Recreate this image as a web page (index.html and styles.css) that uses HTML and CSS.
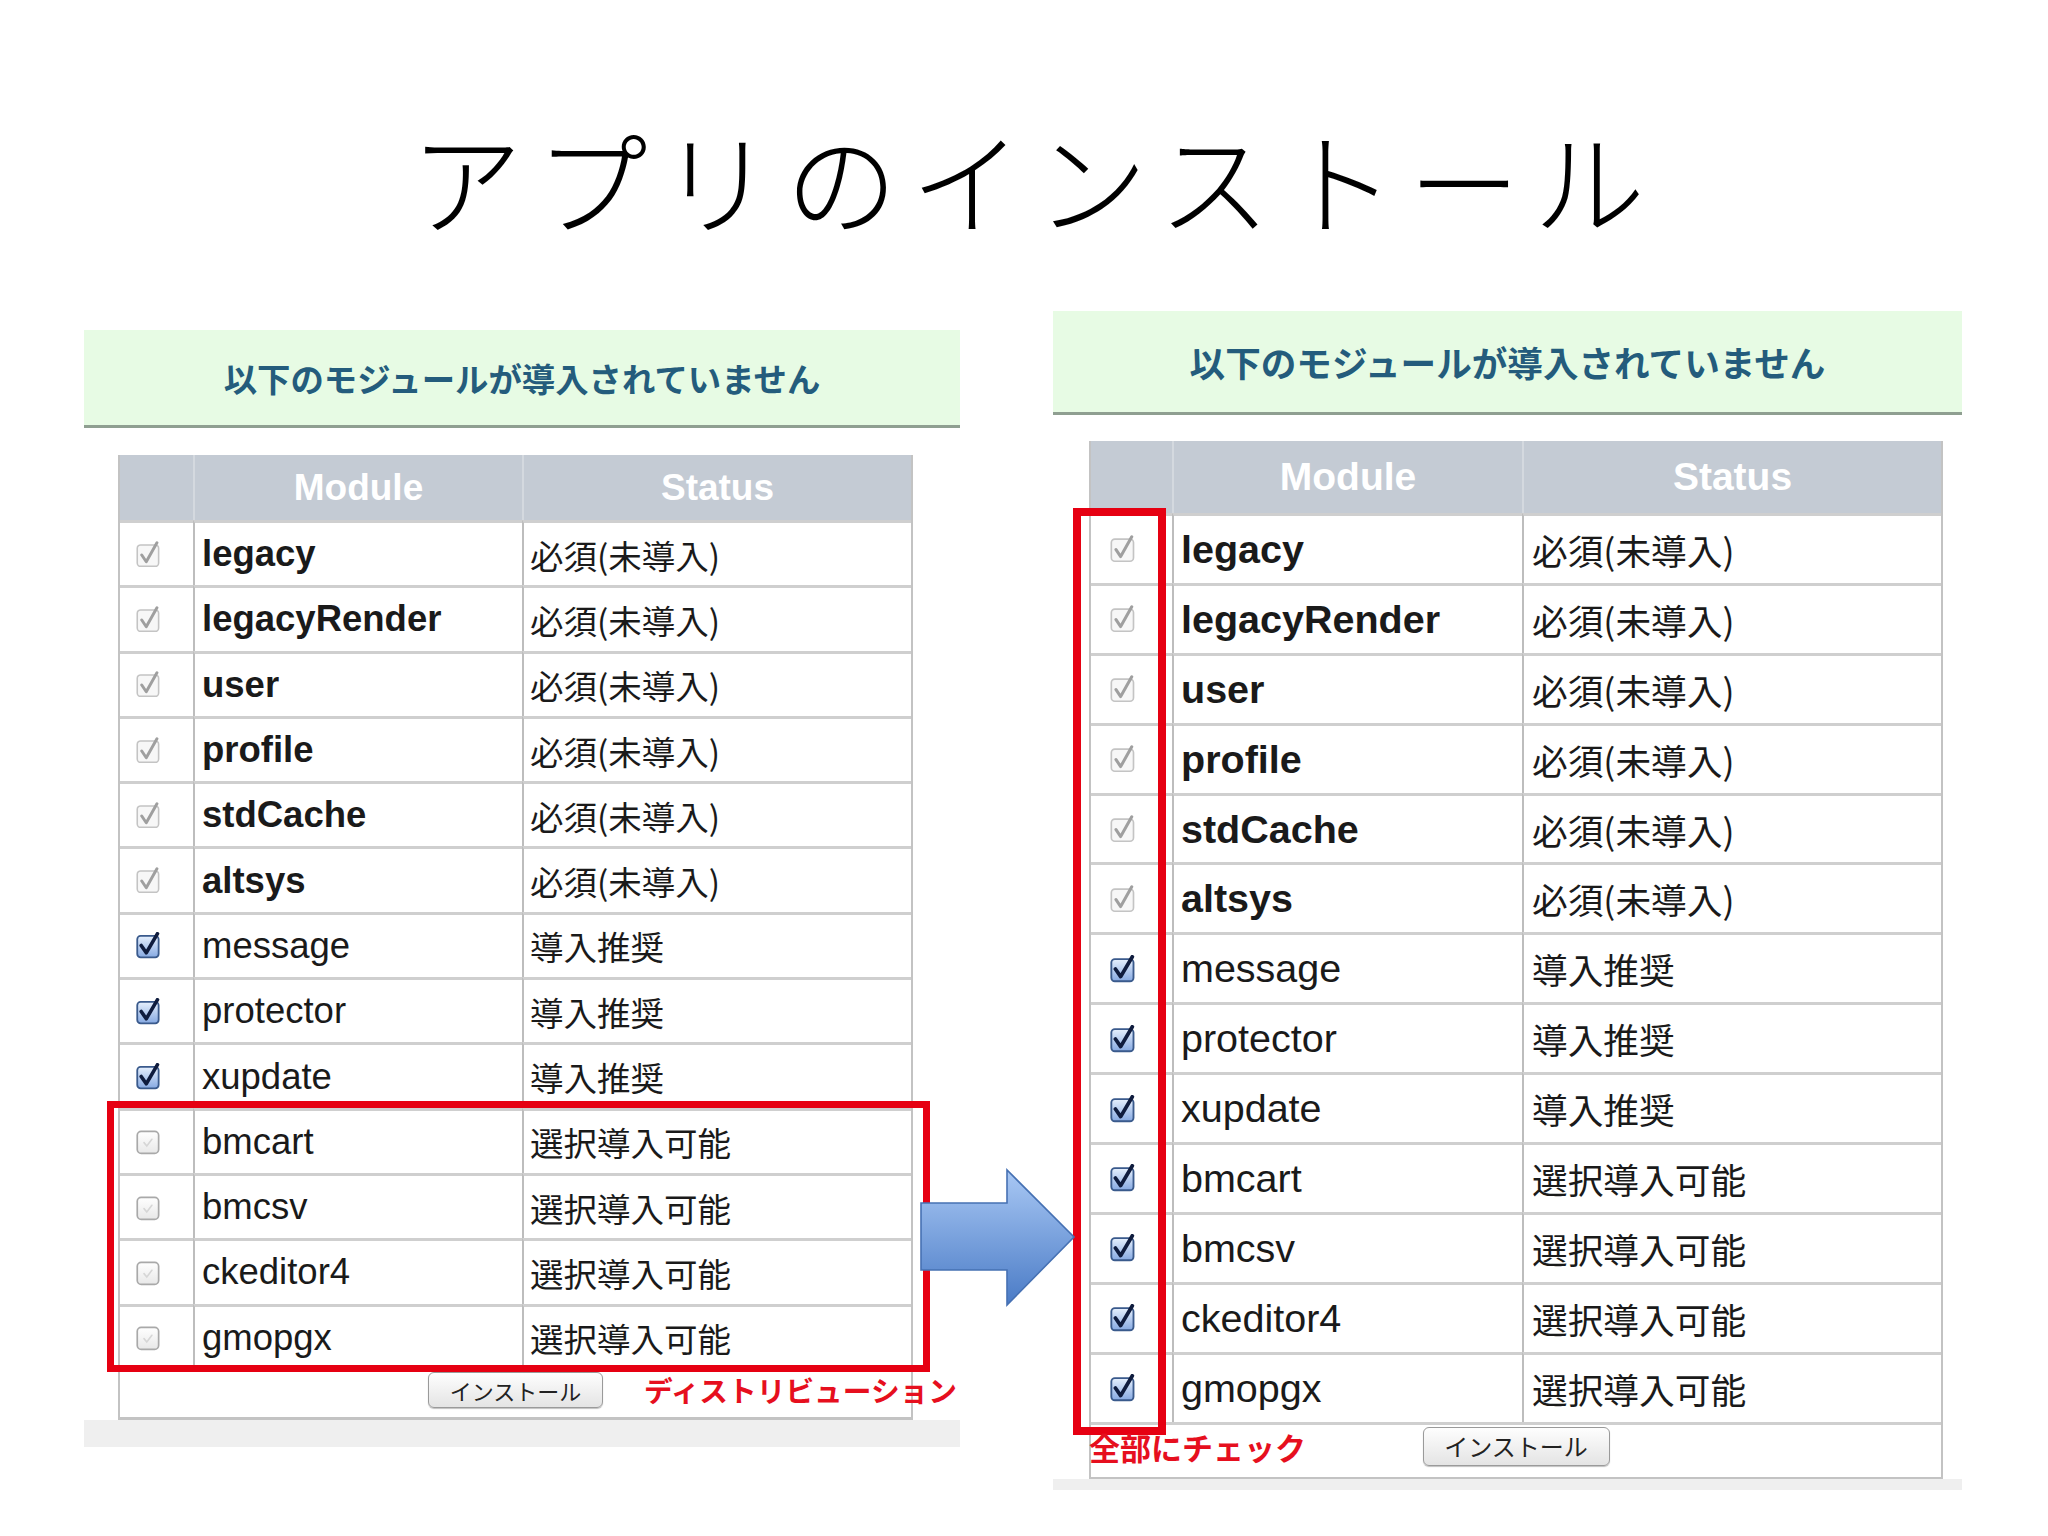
FILE: index.html
```html
<!DOCTYPE html>
<html lang="ja">
<head>
<meta charset="utf-8">
<title>アプリのインストール</title>
<link rel="stylesheet" href="styles.css">
</head>
<body>
<svg class="defs" width="0" height="0" aria-hidden="true">
  <defs>
    <linearGradient id="gBlue" x1="0" y1="0" x2="0" y2="1">
      <stop offset="0" stop-color="#e6f0fd"/>
      <stop offset="1" stop-color="#86a9e2"/>
    </linearGradient>
    <linearGradient id="gOff" x1="0" y1="0" x2="0" y2="1">
      <stop offset="0" stop-color="#ffffff"/>
      <stop offset="1" stop-color="#e8e8e8"/>
    </linearGradient>
    <linearGradient id="gArrow" x1="0" y1="0" x2="0" y2="1">
      <stop offset="0" stop-color="#a9c8f4"/>
      <stop offset="1" stop-color="#4a7bc6"/>
    </linearGradient>
    <symbol id="cb-dis" viewBox="0 0 24 24">
      <rect x="2" y="3.5" width="19" height="19" rx="3" fill="#f7f7f7" stroke="#c4c4c4" stroke-width="1.4"/>
      <path d="M6 12.5 L10 18.5 L19.5 1.5" fill="none" stroke="#9f9f9f" stroke-width="2.6" stroke-linecap="round" stroke-linejoin="round"/>
    </symbol>
    <symbol id="cb-on" viewBox="0 0 24 24">
      <rect x="2" y="3.5" width="19" height="19" rx="3" fill="url(#gBlue)" stroke="#3a5a8c" stroke-width="1.6"/>
      <path d="M5.5 12 L10 18.5 L20 1.5" fill="none" stroke="#0f1c3e" stroke-width="3.2" stroke-linecap="round" stroke-linejoin="round"/>
    </symbol>
    <symbol id="cb-off" viewBox="0 0 24 24">
      <rect x="2" y="3" width="19" height="19.5" rx="3.5" fill="url(#gOff)" stroke="#a9a9a9" stroke-width="1.5"/>
      <path d="M8 13 L10.5 16 L15 10" fill="none" stroke="#d6d6d6" stroke-width="1.4" stroke-linecap="round"/>
    </symbol>
  </defs>
</svg>

<h1 class="title">アプリのインストール</h1>

<main class="stage">
  <section class="panel panel-a">
    <div class="notice">以下のモジュールが導入されていません</div>
    <div class="tbox">
      <div class="grid">
        <div class="hd"></div><div class="hd">Module</div><div class="hd">Status</div>

        <div class="c cb"><svg class="box"><use href="#cb-dis"/></svg></div><div class="c name req">legacy</div><div class="c st">必須(未導入)</div>
        <div class="c cb"><svg class="box"><use href="#cb-dis"/></svg></div><div class="c name req">legacyRender</div><div class="c st">必須(未導入)</div>
        <div class="c cb"><svg class="box"><use href="#cb-dis"/></svg></div><div class="c name req">user</div><div class="c st">必須(未導入)</div>
        <div class="c cb"><svg class="box"><use href="#cb-dis"/></svg></div><div class="c name req">profile</div><div class="c st">必須(未導入)</div>
        <div class="c cb"><svg class="box"><use href="#cb-dis"/></svg></div><div class="c name req">stdCache</div><div class="c st">必須(未導入)</div>
        <div class="c cb"><svg class="box"><use href="#cb-dis"/></svg></div><div class="c name req">altsys</div><div class="c st">必須(未導入)</div>
        <div class="c cb"><svg class="box"><use href="#cb-on"/></svg></div><div class="c name">message</div><div class="c st">導入推奨</div>
        <div class="c cb"><svg class="box"><use href="#cb-on"/></svg></div><div class="c name">protector</div><div class="c st">導入推奨</div>
        <div class="c cb"><svg class="box"><use href="#cb-on"/></svg></div><div class="c name">xupdate</div><div class="c st">導入推奨</div>
        <div class="c cb"><svg class="box"><use href="#cb-off"/></svg></div><div class="c name">bmcart</div><div class="c st">選択導入可能</div>
        <div class="c cb"><svg class="box"><use href="#cb-off"/></svg></div><div class="c name">bmcsv</div><div class="c st">選択導入可能</div>
        <div class="c cb"><svg class="box"><use href="#cb-off"/></svg></div><div class="c name">ckeditor4</div><div class="c st">選択導入可能</div>
        <div class="c cb"><svg class="box"><use href="#cb-off"/></svg></div><div class="c name">gmopgx</div><div class="c st">選択導入可能</div>
      </div>
      <div class="foot"><button class="btn" type="button">インストール</button></div>
    </div>
    <div class="band"></div>
  </section>

  <section class="panel panel-b">
    <div class="notice">以下のモジュールが導入されていません</div>
    <div class="tbox">
      <div class="grid">
        <div class="hd"></div><div class="hd">Module</div><div class="hd">Status</div>

        <div class="c cb"><svg class="box"><use href="#cb-dis"/></svg></div><div class="c name req">legacy</div><div class="c st">必須(未導入)</div>
        <div class="c cb"><svg class="box"><use href="#cb-dis"/></svg></div><div class="c name req">legacyRender</div><div class="c st">必須(未導入)</div>
        <div class="c cb"><svg class="box"><use href="#cb-dis"/></svg></div><div class="c name req">user</div><div class="c st">必須(未導入)</div>
        <div class="c cb"><svg class="box"><use href="#cb-dis"/></svg></div><div class="c name req">profile</div><div class="c st">必須(未導入)</div>
        <div class="c cb"><svg class="box"><use href="#cb-dis"/></svg></div><div class="c name req">stdCache</div><div class="c st">必須(未導入)</div>
        <div class="c cb"><svg class="box"><use href="#cb-dis"/></svg></div><div class="c name req">altsys</div><div class="c st">必須(未導入)</div>
        <div class="c cb"><svg class="box"><use href="#cb-on"/></svg></div><div class="c name">message</div><div class="c st">導入推奨</div>
        <div class="c cb"><svg class="box"><use href="#cb-on"/></svg></div><div class="c name">protector</div><div class="c st">導入推奨</div>
        <div class="c cb"><svg class="box"><use href="#cb-on"/></svg></div><div class="c name">xupdate</div><div class="c st">導入推奨</div>
        <div class="c cb"><svg class="box"><use href="#cb-on"/></svg></div><div class="c name">bmcart</div><div class="c st">選択導入可能</div>
        <div class="c cb"><svg class="box"><use href="#cb-on"/></svg></div><div class="c name">bmcsv</div><div class="c st">選択導入可能</div>
        <div class="c cb"><svg class="box"><use href="#cb-on"/></svg></div><div class="c name">ckeditor4</div><div class="c st">選択導入可能</div>
        <div class="c cb"><svg class="box"><use href="#cb-on"/></svg></div><div class="c name">gmopgx</div><div class="c st">選択導入可能</div>
      </div>
      <div class="foot"><button class="btn" type="button">インストール</button></div>
    </div>
    <div class="band"></div>
  </section>
</main>

<div class="redbox redbox-a"></div>
<div class="redbox redbox-b"></div>

<svg class="arrow" viewBox="0 0 160 140" aria-hidden="true">
  <path d="M3 35 L89 35 L89 2 L156 69 L89 137 L89 102 L3 102 Z" fill="url(#gArrow)" stroke="#4671b3" stroke-width="1.6" stroke-linejoin="miter"/>
</svg>

<span class="note note-a">ディストリビューション</span>
<span class="note note-b">全部にチェック</span>
</body>
</html>
```

FILE: styles.css
```css
* { box-sizing: border-box; }

html, body { margin: 0; }

body {
  width: 2048px;
  height: 1536px;
  position: relative;
  overflow: hidden;
  background: #ffffff;
  font-family: "Liberation Sans", "Noto Sans CJK JP", sans-serif;
  color: #1c1c1c;
}

.defs { position: absolute; width: 0; height: 0; overflow: hidden; }

.title {
  margin: 0;
  padding: 111px 0 0 21px;
  height: 245px;
  line-height: 134px;
  font-family: "Noto Sans CJK JP", sans-serif;
  font-weight: 300;
  font-size: 112px;
  letter-spacing: 13px;
  text-align: center;
  color: #000;
}

.stage { display: flex; align-items: flex-start; }

.panel-a { width: 876px; margin: 85px 0 0 84px; }
.panel-b { width: 909px; margin: 66px 0 0 93px; }

.notice {
  background: #e7fbe4;
  border-bottom: 3px solid #8f9f91;
  text-align: center;
  font-family: "Noto Sans CJK JP", sans-serif;
  font-weight: 700;
  color: #245c7c;
}
.panel-a .notice { height: 98px; line-height: 95px; font-size: 33.4px; }
.panel-b .notice { height: 104px; line-height: 101px; font-size: 35.6px; }

.tbox {
  background: #fff;
  border-style: solid;
  border-color: #c3c3c3;
  border-width: 0 2px 3px 2px;
}
.panel-a .tbox { width: 795px; margin: 27px 0 0 34px; }
.panel-b .tbox { width: 854px; margin: 26px 0 0 36px; border-bottom-width: 2px; }

.grid { display: grid; }
.panel-a .grid {
  grid-template-columns: 73px 329px 1fr;
  grid-template-rows: 65px;
  grid-auto-rows: 65.3px;
}
.panel-b .grid {
  grid-template-columns: 81px 350px 1fr;
  grid-template-rows: 72px;
  grid-auto-rows: 69.9px;
}

.hd {
  background: #c4cbd4;
  color: #ffffff;
  font-weight: 700;
  display: flex;
  align-items: center;
  justify-content: center;
}
.hd + .hd { border-left: 2px solid #d4d9df; }
.panel-a .hd { font-size: 37px; }
.panel-b .hd { font-size: 39px; }

.c {
  display: flex;
  align-items: center;
  border-top: 3px solid #cfcfcf;
  border-left: 2px solid #bdbdbd;
  white-space: nowrap;
}
.c.cb { border-left: 0; }

.panel-a .cb { padding-left: 15px; }
.panel-b .cb { padding-left: 18px; }
.panel-a .box { width: 27px; height: 27px; }
.panel-b .box { width: 28px; height: 28px; }

.name { color: #1a1a1a; }
.name.req { font-weight: 700; }
.panel-a .name { font-size: 36.5px; padding-left: 7px; }
.panel-b .name { font-size: 39.5px; padding-left: 7px; }

.st { font-family: "Noto Sans CJK JP", sans-serif; color: #1a1a1a; }
.panel-a .st { font-size: 33.5px; padding-left: 6px; }
.panel-b .st { font-size: 35.7px; padding-left: 8px; }

.foot {
  border-top: 3px solid #cfcfcf;
  display: flex;
  justify-content: center;
  align-items: flex-start;
}
.panel-a .foot { height: 48px; padding-top: 0; }
.panel-b .foot { height: 55px; padding-top: 2px; }

.btn {
  font-family: "Noto Sans CJK JP", sans-serif;
  color: #222;
  border: 1px solid #9a9a9a;
  border-radius: 6px;
  background: linear-gradient(#fefefe, #e4e4e4);
  box-shadow: 0 1px 1px rgba(0, 0, 0, 0.25);
  padding: 0;
  line-height: 1;
}
.panel-a .btn { width: 175px; height: 36px; font-size: 22px; }
.panel-b .btn { width: 187px; height: 39px; font-size: 24px; }

.band { background: #efefef; }
.panel-a .band { height: 27px; }
.panel-b .band { height: 11px; }

.redbox {
  position: absolute;
  border: 7px solid #e60012;
}
.redbox-a { left: 107px; top: 1101px; width: 823px; height: 271px; }
.redbox-b { left: 1073px; top: 508px; width: 93px; height: 927px; border-width: 8px; }

.arrow {
  position: absolute;
  left: 918px;
  top: 1168px;
  width: 160px;
  height: 140px;
}

.note {
  position: absolute;
  color: #e60f1e;
  font-weight: 700;
  font-family: "Noto Sans CJK JP", sans-serif;
  line-height: 40px;
  white-space: nowrap;
}
.note-a { left: 644px; top: 1370px; font-size: 28.7px; }
.note-b { left: 1089px; top: 1427px; font-size: 31px; }
```
